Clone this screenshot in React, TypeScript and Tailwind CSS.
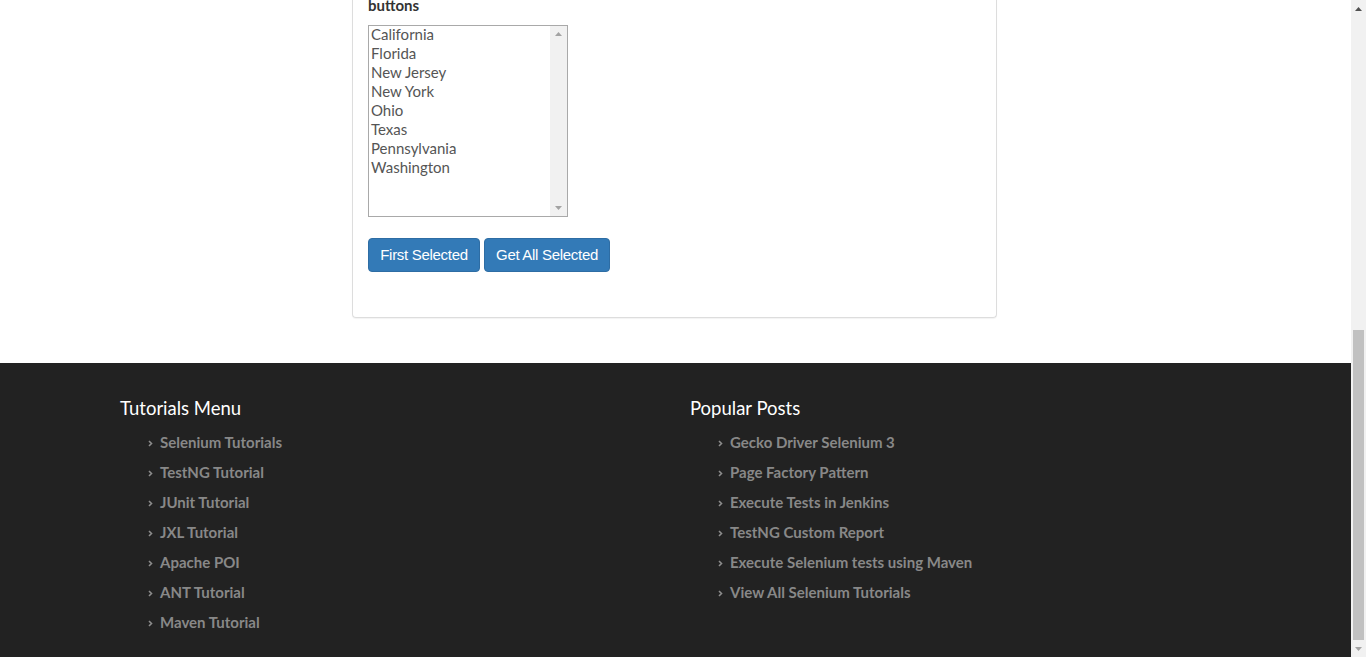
import React from "react";

const states = [
  "California",
  "Florida",
  "New Jersey",
  "New York",
  "Ohio",
  "Texas",
  "Pennsylvania",
  "Washington",
];

const tutorials = [
  "Selenium Tutorials",
  "TestNG Tutorial",
  "JUnit Tutorial",
  "JXL Tutorial",
  "Apache POI",
  "ANT Tutorial",
  "Maven Tutorial",
];

const posts = [
  "Gecko Driver Selenium 3",
  "Page Factory Pattern",
  "Execute Tests in Jenkins",
  "TestNG Custom Report",
  "Execute Selenium tests using Maven",
  "View All Selenium Tutorials",
];

function Arrow({ dir, color }: { dir: "up" | "down"; color: string }) {
  return (
    <svg width="7" height="4" viewBox="0 0 7 4" className="block">
      {dir === "up" ? (
        <polygon points="0,4 7,4 3.5,0" fill={color} />
      ) : (
        <polygon points="0,0 7,0 3.5,4" fill={color} />
      )}
    </svg>
  );
}

function Chevron() {
  return (
    <svg width="5" height="7" viewBox="0 0 5 7" className="mr-[7px] mt-[3px] block">
      <polyline points="1,1 3.5,3.5 1,6" fill="none" stroke="#8c8c8c" strokeWidth="1.6" />
    </svg>
  );
}

function FooterList({ title, items }: { title: string; items: string[] }) {
  return (
    <div className="w-[570px] pr-[15px]">
      <h3 className="text-[18.5px] leading-[22px] text-white">{title}</h3>
      <ul className="mt-[8px] pl-[28px]">
        {items.map((item) => (
          <li key={item} className="flex h-[30px] items-center text-[15px] font-bold text-[#888888]">
            <Chevron />
            {item}
          </li>
        ))}
      </ul>
    </div>
  );
}

export default function App() {
  return (
    <div className="flex h-[657px] w-[1366px] overflow-hidden bg-white font-['Lato',sans-serif]">
      <div className="flex flex-1 flex-col">
        {/* Card */}
        <div className="-mt-[20px] ml-[352px] h-[338px] w-[645px] rounded-b-[4px] border border-t-0 border-[#dddddd] px-[15px] shadow-[0_1px_1px_rgba(0,0,0,0.05)]">
          <div className="pt-[15px] text-[15px] font-bold leading-[20px] text-[#333333]">buttons</div>
          <div className="mt-[10px] flex h-[192px] w-[200px] border border-[#a9a9a9] bg-white">
            <ul className="-mt-[1px] flex-1 pl-[2px]">
              {states.map((s) => (
                <li key={s} className="h-[19px] text-[15px] leading-[19px] text-[#555555]">
                  {s}
                </li>
              ))}
            </ul>
            <div className="flex w-[17px] flex-col items-center justify-between bg-[#f1f1f1] py-[6px]">
              <Arrow dir="up" color="#a3a3a3" />
              <Arrow dir="down" color="#a3a3a3" />
            </div>
          </div>
          <div className="mt-[21px] flex gap-[4px] font-['Liberation_Sans',sans-serif]">
            <button className="h-[34px] w-[112px] rounded-[4px] border border-[#2e6da4] bg-[#337ab7] text-[15px] tracking-[-0.3px] text-white">
              First Selected
            </button>
            <button className="h-[34px] w-[126px] rounded-[4px] border border-[#2e6da4] bg-[#337ab7] text-[15px] tracking-[-0.3px] text-white">
              Get All Selected
            </button>
          </div>
        </div>

        {/* Footer */}
        <div className="mt-[45px] flex-1 bg-[#222222] pl-[120px] pt-[34px]">
          <div className="flex">
            <FooterList title="Tutorials Menu" items={tutorials} />
            <FooterList title="Popular Posts" items={posts} />
          </div>
        </div>
      </div>

      {/* Page scrollbar */}
      <div className="flex w-[15px] flex-col items-center bg-[#f1f1f1]">
        <div className="flex h-[17px] items-center">
          <Arrow dir="up" color="#505050" />
        </div>
        <div className="mt-[313px] h-[310px] w-[11px] bg-[#c1c1c1]" />
        <div className="flex h-[17px] items-center">
          <Arrow dir="down" color="#a3a3a3" />
        </div>
      </div>
    </div>
  );
}
